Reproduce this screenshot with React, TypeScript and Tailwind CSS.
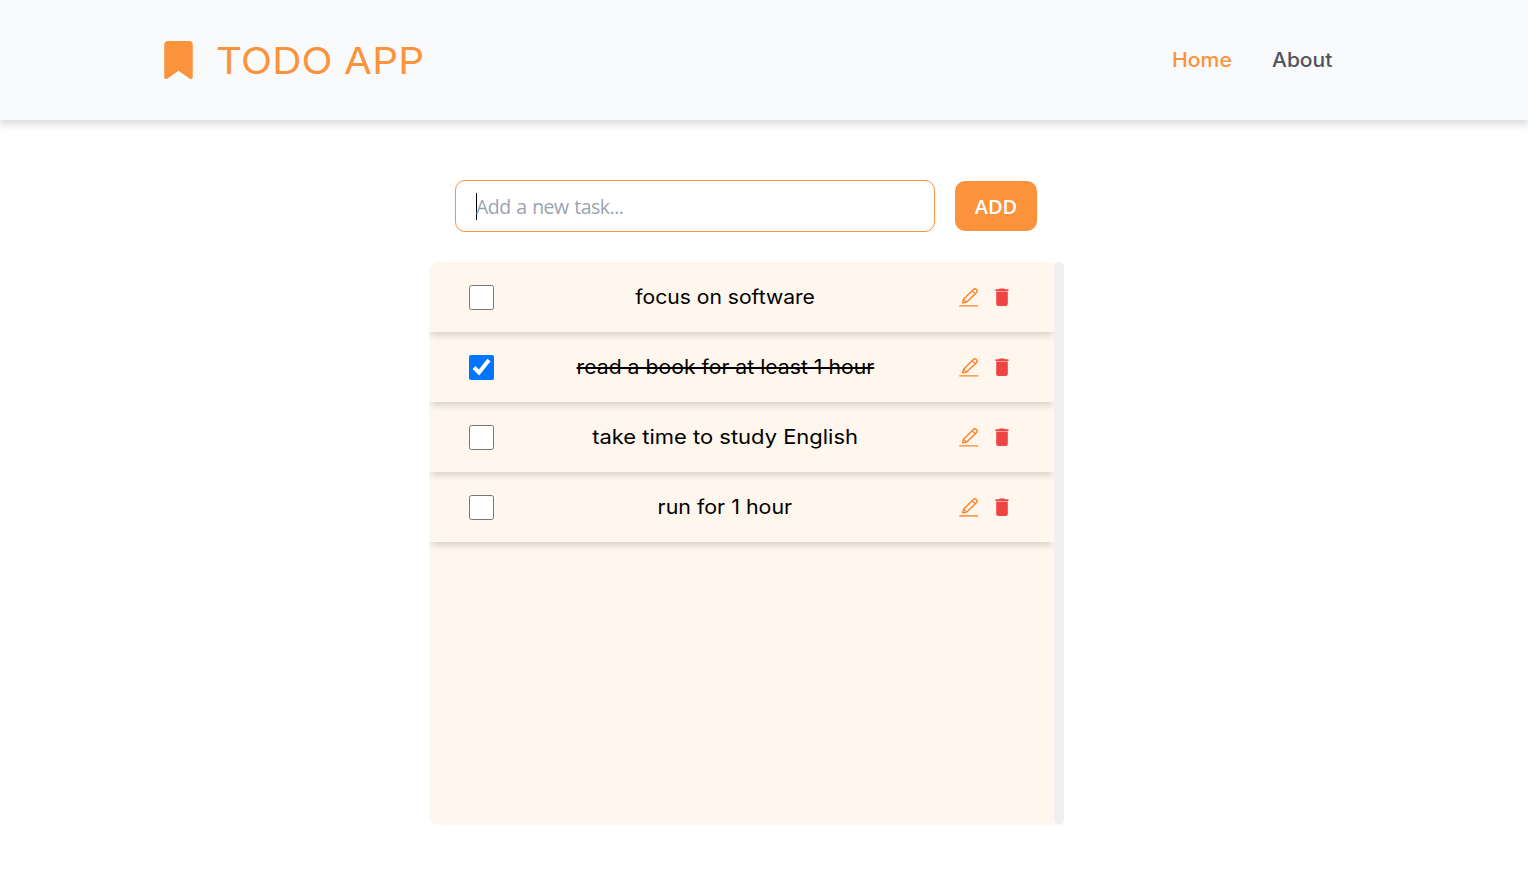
import { useState } from "react";
import { FaBookmark } from "react-icons/fa6";

interface Task {
  id: number;
  text: string;
  done: boolean;
  stretch: string;
}

const initialTasks: Task[] = [
  { id: 1, text: "focus on software", done: false, stretch: "scale-x-[1.055]" },
  { id: 2, text: "read a book for at least 1 hour", done: true, stretch: "scale-x-[1.06]" },
  { id: 3, text: "take time to study English", done: false, stretch: "scale-x-[1.098]" },
  { id: 4, text: "run for 1 hour", done: false, stretch: "scale-x-[1.07]" },
];

function EditIcon() {
  return (
    <svg viewBox="0 0 20 20" className="size-5" fill="none" stroke="#fb8428" strokeWidth="1.4" strokeLinejoin="round">
      <path d="M3.6 15.8 4.5 12.3 14.4 2.4Q15.8 1.1 17.3 2.5 18.9 4 17.6 5.5L7.7 15.1Z" />
      <path d="M13.1 3.7 16.3 6.8M4.5 12.3 7.7 15.1" strokeWidth="1.2" />
      <path d="M.3 18.9H19.2" />
    </svg>
  );
}

function TrashIcon() {
  return (
    <svg viewBox="0 0 14 18" className="h-[18px] w-[14px]" fill="#ef4444">
      <path d="M1.1 1.3H4L4.8.5H9.2L10 1.3H12.9Q13.6 1.3 13.6 1.9V3H.4V1.9Q.4 1.3 1.1 1.3Z" />
      <path d="M1.2 3H12.8V4H1.2Z" opacity=".5" />
      <path d="M1.2 4H12.8V15.9Q12.8 17.9 10.8 17.9H3.2Q1.2 17.9 1.2 15.9Z" />
    </svg>
  );
}

function Header() {
  return (
    <header className="flex h-[120px] items-center justify-between bg-gray-50 pr-[196px] pl-[164px] shadow-[0_3px_8px_1px_rgba(0,0,0,0.15)]">
      <div className="flex items-center text-[#fb923c]">
        <FaBookmark className="h-[38px] w-[29px]" />
        <h1 className="ml-[23px] origin-left scale-x-[1.11] pt-0.5 text-[36.5px] leading-none tracking-[0.1px]">TODO APP</h1>
      </div>
      <nav className="flex gap-10 text-xl font-medium">
        <a href="#home" className="w-[60px] text-[#fb923c]">
          <span className="inline-block origin-left scale-x-[1.06]">Home</span>
        </a>
        <a href="#about" className="w-[60px] text-[#52525b]">
          <span className="inline-block origin-left scale-x-[1.05]">About</span>
        </a>
      </nav>
    </header>
  );
}

export default function App() {
  const [tasks, setTasks] = useState(initialTasks);
  const toggle = (id: number) =>
    setTasks(tasks.map((t) => (t.id === id ? { ...t, done: !t.done } : t)));

  return (
    <div className="min-h-[873px] bg-white font-['Inter',sans-serif] text-black">
      <Header />
      <main className="pt-[60px]">
        <form className="ml-[455px] flex items-center gap-5 font-['Open_Sans',sans-serif] text-xl">
          <div className="flex h-[52px] w-[480px] items-center rounded-[10px] border border-[#fb923c] pl-5">
            <span className="h-[27px] w-px bg-black" />
            <span className="-ml-px pt-0.5 text-[19.5px] tracking-[-0.5px] text-[#9ca3af] [word-spacing:1px]">Add a new task...</span>
          </div>
          <button type="button" className="h-[50px] w-[82px] rounded-[10px] bg-[#fb923c] pt-0.5 font-semibold text-white">ADD</button>
        </form>
        <section className="mt-[30px] ml-[429px] flex h-[563px] w-[635px]">
          <ul className="flex-1 overflow-hidden rounded-l-[10px] bg-[#fff6ed]">
            {tasks.map((task) => (
              <li key={task.id} className="flex h-[70px] items-center pr-[45px] pl-10 shadow-[0_5px_7px_-2px_rgba(0,0,0,0.16)]">
                <input type="checkbox" checked={task.done} onChange={() => toggle(task.id)} className="size-[25px]" />
                <div className="flex-1 pr-[3px] text-center text-xl">
                  <span className={`inline-block ${task.stretch} ${task.done ? "line-through" : ""}`}>{task.text}</span>
                </div>
                <div className="flex items-center gap-4">
                  <EditIcon />
                  <TrashIcon />
                </div>
              </li>
            ))}
          </ul>
          <div className="w-[10px] rounded-[5px] bg-[#f0f0f0]" />
        </section>
      </main>
    </div>
  );
}
